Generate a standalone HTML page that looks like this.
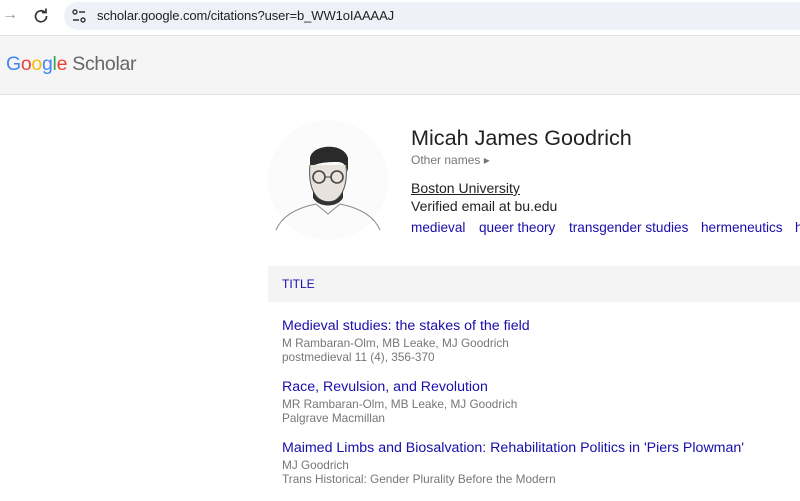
<!DOCTYPE html>
<html><head><meta charset="utf-8"><style>
body{margin:0;width:800px;height:501px;overflow:hidden;background:#fff;font-family:"Liberation Sans",Arial,sans-serif;position:relative}
.a{position:absolute;white-space:nowrap}
.bl{color:#1a0dab}
</style></head><body>
<div class="a" style="left:0;top:0;width:800px;height:33px;background:#fff"></div>
<div class="a" style="left:64px;top:2px;width:760px;height:28px;border-radius:14px;background:#eef1f8"></div>
<div class="a" style="left:2px;top:6px;font-size:16px;color:#999">→</div>
<svg class="a" style="left:32px;top:7px" width="18" height="18" viewBox="0 0 18 18"><path d="M13 5.5A5.5 5.5 0 1 0 14.5 9" fill="none" stroke="#333" stroke-width="1.7"/><path d="M10 5.5h4V1.5" fill="none" stroke="#333" stroke-width="1.7"/></svg>
<svg class="a" style="left:71px;top:8px" width="16" height="16" viewBox="0 0 16 16"><circle cx="4" cy="4" r="2" fill="none" stroke="#333" stroke-width="1.4"/><path d="M8 4h6M2 12h6" stroke="#333" stroke-width="1.4"/><circle cx="12" cy="12" r="2" fill="none" stroke="#333" stroke-width="1.4"/></svg>
<div class="a" style="left:97px;top:8px;font-size:13px;color:#222;letter-spacing:-0.1px">scholar.google.com/citations?user=b_WW1oIAAAAJ</div>
<div class="a" style="left:0;top:35px;width:800px;height:58px;background:#f5f5f5;border-top:1px solid #e0e0e0;border-bottom:1px solid #e0e0e0"></div>
<div class="a" style="left:6px;top:53px;font-size:19.5px;letter-spacing:-0.3px"><span style="color:#4285f4">G</span><span style="color:#ea4335">o</span><span style="color:#fbbc05">o</span><span style="color:#4285f4">g</span><span style="color:#34a853">l</span><span style="color:#ea4335">e</span> <span style="color:#666">Scholar</span></div>
<svg class="a" style="left:268px;top:120px" width="120" height="120" viewBox="0 0 120 120">
<circle cx="60" cy="60" r="60" fill="#fbfbfb"/>
<path d="M42 38c2-14 34-16 38 0l0 14c-2-8-6-10-10-10-8 0-22 0-28 6z" fill="#2a2a2a"/>
<path d="M42 45c-2 20 4 36 18 38 14-2 20-18 18-38" fill="#e8e2dc" stroke="#555" stroke-width="1"/>
<path d="M45 70c4 14 26 16 30 0l0 8c-6 10-24 10-30 0z" fill="#333"/>
<circle cx="51" cy="57" r="6" fill="none" stroke="#444" stroke-width="1.6"/><circle cx="69" cy="57" r="6" fill="none" stroke="#444" stroke-width="1.6"/><path d="M57 57h6" stroke="#444"/>
<path d="M8 110c6-14 20-22 40-26l12 10 12-10c20 4 34 12 40 26" fill="none" stroke="#888" stroke-width="1"/>
</svg>
<div class="a" style="left:411px;top:125px;font-size:21.6px;color:#222">Micah James Goodrich</div>
<div class="a" style="left:411px;top:153px;font-size:12px;color:#777">Other names ▸</div>
<div class="a" style="left:411px;top:180px;font-size:14px;color:#222;text-decoration:underline">Boston University</div>
<div class="a" style="left:411px;top:198px;font-size:14px;color:#222">Verified email at bu.edu</div>
<div class="a bl" style="left:411px;top:220px;font-size:13.6px">medieval</div>
<div class="a bl" style="left:479px;top:220px;font-size:13.6px">queer theory</div>
<div class="a bl" style="left:569px;top:220px;font-size:13.6px">transgender studies</div>
<div class="a bl" style="left:701px;top:220px;font-size:13.6px">hermeneutics</div>
<div class="a bl" style="left:795px;top:220px;font-size:13.6px">h</div>
<div class="a" style="left:268px;top:266px;width:532px;height:36px;background:#f4f4f4"></div>
<div class="a bl" style="left:282px;top:277px;font-size:12px">TITLE</div>
<div class="a bl" style="left:282px;top:318px;font-size:14.2px">Medieval studies: the stakes of the field</div>
<div class="a" style="left:282px;top:336px;font-size:11.8px;color:#777">M Rambaran-Olm, MB Leake, MJ Goodrich</div>
<div class="a" style="left:282px;top:350px;font-size:11.8px;color:#777">postmedieval 11 (4), 356-370</div>
<div class="a bl" style="left:282px;top:379px;font-size:14.2px">Race, Revulsion, and Revolution</div>
<div class="a" style="left:282px;top:397px;font-size:11.8px;color:#777">MR Rambaran-Olm, MB Leake, MJ Goodrich</div>
<div class="a" style="left:282px;top:411px;font-size:11.8px;color:#777">Palgrave Macmillan</div>
<div class="a bl" style="left:282px;top:440px;font-size:14.2px">Maimed Limbs and Biosalvation: Rehabilitation Politics in 'Piers Plowman'</div>
<div class="a" style="left:282px;top:458px;font-size:11.8px;color:#777">MJ Goodrich</div>
<div class="a" style="left:282px;top:472px;font-size:11.8px;color:#777">Trans Historical: Gender Plurality Before the Modern</div>
</body></html>
